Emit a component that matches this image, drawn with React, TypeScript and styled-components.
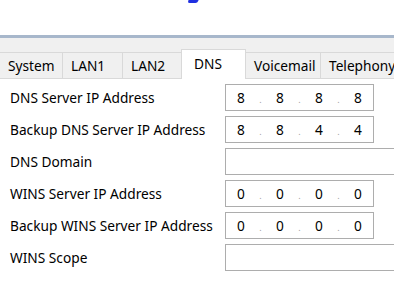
import React from "react";
import styled, { createGlobalStyle } from "styled-components";

const Global = createGlobalStyle`
  html, body { margin: 0; padding: 0; background: #ffffff; }
  body { font-family: "Noto Sans", "Open Sans", sans-serif; font-size: 13.7px; color: #000; overflow: hidden; }
`;

const Page = styled.div`
  width: 394px;
  height: 301px;
  display: flex;
  flex-direction: column;
  overflow: hidden;
`;

const TopArea = styled.div`
  height: 35px;
  display: flex;
  justify-content: flex-start;
  padding-left: 188px;
`;

const BlueMark = styled.div`
  width: 10px;
  height: 3px;
  background: #1f2fe0;
  border-radius: 0 0 2px 2px;
  transform: skewX(-20deg);
`;

const Rule = styled.div`
  height: 3px;
  background: #a7b7cb;
`;

const TabBand = styled.div`
  background: #f0f0f0;
  height: 41px;
  display: flex;
  align-items: flex-end;
  overflow: hidden;
`;

const Tab = styled.div<{ $active?: boolean; $w: number }>`
  box-sizing: border-box;
  width: ${(p) => p.$w}px;
  height: ${(p) => (p.$active ? 30 : 27)}px;
  background: ${(p) => (p.$active ? "#ffffff" : "#f0f0f0")};
  border: 1px solid #d9d9d9;
  border-bottom: ${(p) => (p.$active ? "none" : "1px solid #d9d9d9")};
  margin-left: -1px;
  display: flex;
  align-items: ${(p) => (p.$active ? "flex-start" : "center")};
  padding-top: ${(p) => (p.$active ? 4 : 0)}px;
  padding-left: ${(p) => (p.$active ? 12 : 8)}px;
  white-space: nowrap;
  flex-shrink: 0;
  position: relative;
  z-index: ${(p) => (p.$active ? 1 : 0)};
`;

const Panel = styled.div`
  flex: 1;
  background: #ffffff;
  display: flex;
  flex-direction: column;
  padding-top: 5px;
`;

const Row = styled.div`
  height: 32px;
  display: grid;
  grid-template-columns: 225px 1fr;
  align-items: start;
`;

const Label = styled.div`
  padding-left: 10px;
  line-height: 27px;
  white-space: nowrap;
`;

const Box = styled.div<{ $wide?: boolean }>`
  box-sizing: border-box;
  height: 27px;
  width: ${(p) => (p.$wide ? 200 : 149)}px;
  border: 1px solid #adadad;
  background: #fff;
  display: flex;
  align-items: center;
`;

const Octet = styled.span`
  width: 30px;
  text-align: center;
`;

const Dot = styled.span`
  width: 9px;
  text-align: center;
  color: #a0a0a0;
  font-size: 9px;
  line-height: 1;
  padding-top: 4px;
`;

const tabs = [
  { name: "System", w: 63 },
  { name: "LAN1", w: 61 },
  { name: "LAN2", w: 60 },
  { name: "DNS", w: 65, active: true },
  { name: "Voicemail", w: 76 },
  { name: "Telephony", w: 95 },
];

const rows: { label: string; ip?: string[] }[] = [
  { label: "DNS Server IP Address", ip: ["8", "8", "8", "8"] },
  { label: "Backup DNS Server IP Address", ip: ["8", "8", "4", "4"] },
  { label: "DNS Domain" },
  { label: "WINS Server IP Address", ip: ["0", "0", "0", "0"] },
  { label: "Backup WINS Server IP Address", ip: ["0", "0", "0", "0"] },
  { label: "WINS Scope" },
];

export default function App() {
  return (
    <Page>
      <Global />
      <TopArea>
        <BlueMark />
      </TopArea>
      <Rule />
      <TabBand>
        {tabs.map((t, i) => (
          <Tab key={t.name} $w={t.w + (i === 0 ? 1 : 0)} $active={t.active}>
            {t.name}
          </Tab>
        ))}
      </TabBand>
      <Panel>
        {rows.map((r) => (
          <Row key={r.label}>
            <Label>{r.label}</Label>
            {r.ip ? (
              <Box>
                {r.ip.map((o, i) => (
                  <React.Fragment key={i}>
                    <Octet>{o}</Octet>
                    {i < 3 && <Dot>.</Dot>}
                  </React.Fragment>
                ))}
              </Box>
            ) : (
              <Box $wide />
            )}
          </Row>
        ))}
      </Panel>
    </Page>
  );
}
